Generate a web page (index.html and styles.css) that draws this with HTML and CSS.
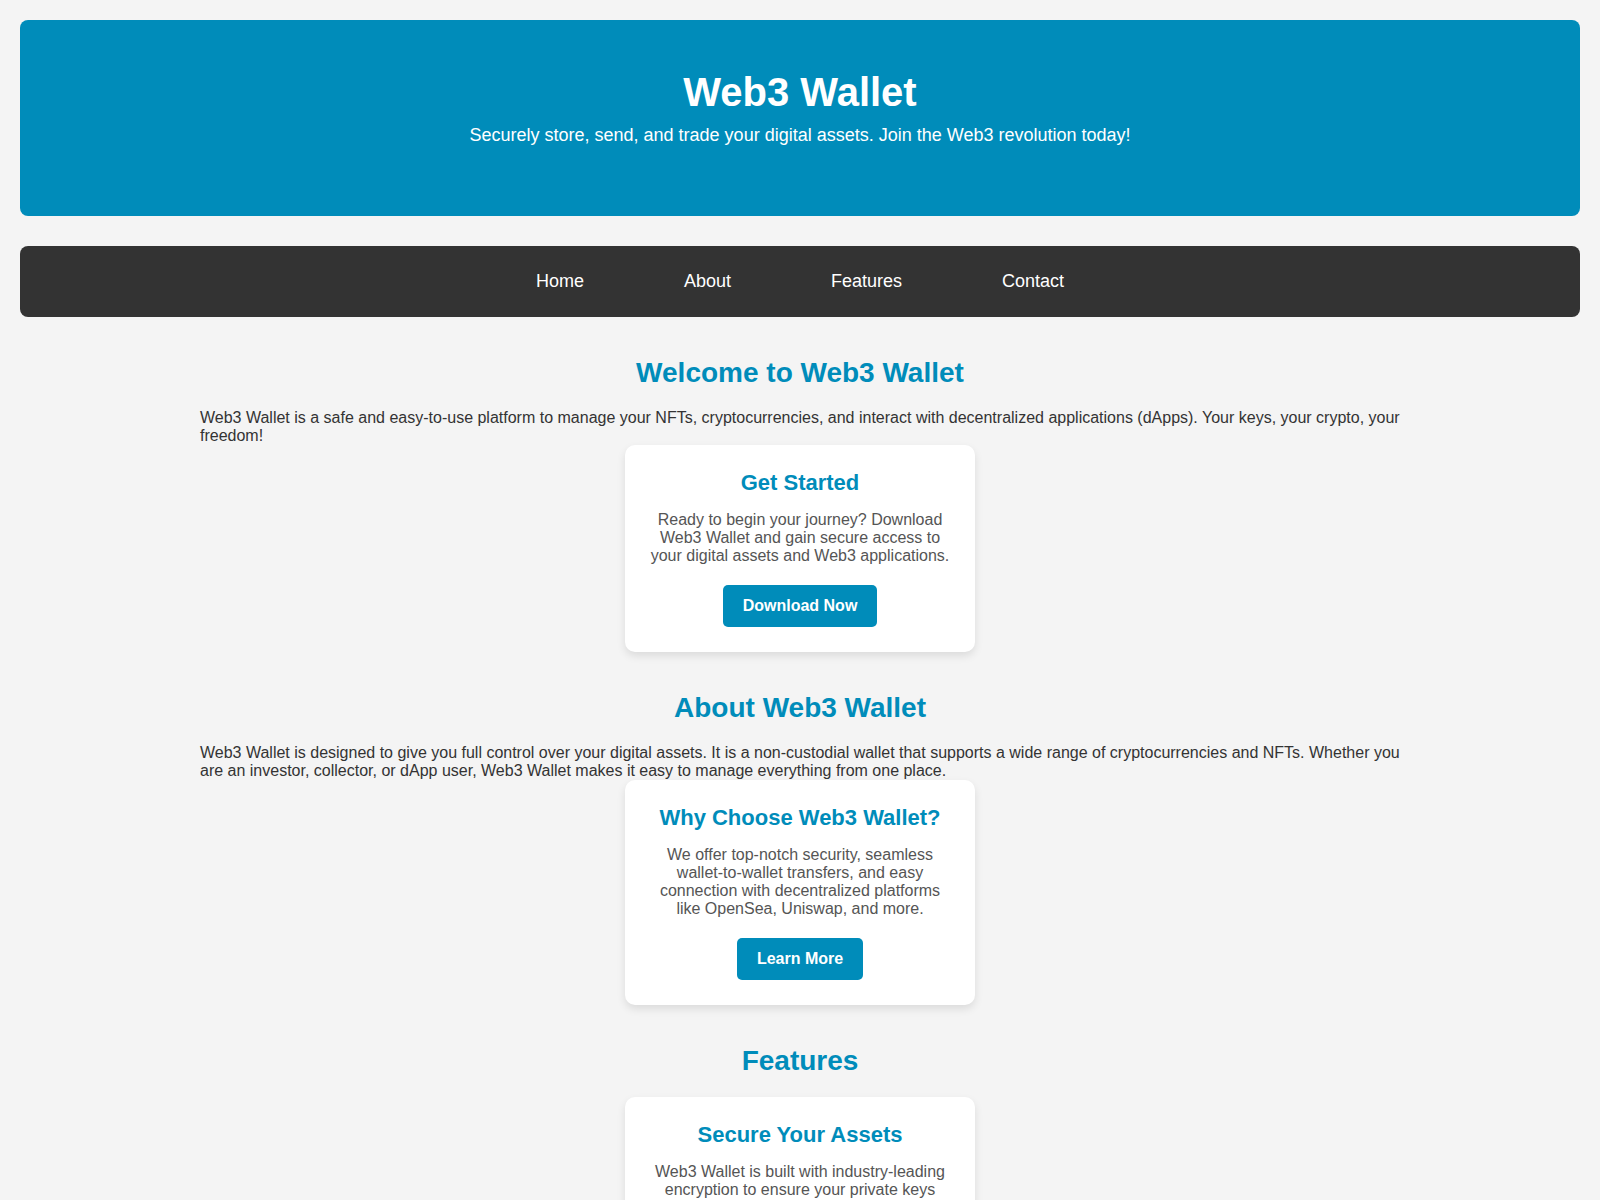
FILE: index.html
```html
<!DOCTYPE html>
<html lang="en">
<head>
<meta charset="utf-8">
<title>Web3 Wallet</title>
<link rel="stylesheet" href="styles.css">
</head>
<body>
<header class="hero">
  <h1 class="hero-title">Web3 Wallet</h1>
  <p class="hero-sub">Securely store, send, and trade your digital assets. Join the Web3 revolution today!</p>
</header>
<nav class="nav">
  <a class="nav-link" href="#home">Home</a>
  <a class="nav-link" href="#about">About</a>
  <a class="nav-link" href="#features">Features</a>
  <a class="nav-link" href="#contact">Contact</a>
</nav>
<main class="main">
  <section class="section" id="home">
    <h2 class="section-title">Welcome to Web3 Wallet</h2>
    <p class="section-text">Web3 Wallet is a safe and easy-to-use platform to manage your NFTs, cryptocurrencies, and interact with decentralized applications (dApps). Your keys, your crypto, your freedom!</p>
    <div class="card">
      <h3 class="card-title">Get Started</h3>
      <p class="card-text">Ready to begin your journey? Download Web3 Wallet and gain secure access to your digital assets and Web3 applications.</p>
      <a class="btn" href="#download">Download Now</a>
    </div>
  </section>
  <section class="section" id="about">
    <h2 class="section-title">About Web3 Wallet</h2>
    <p class="section-text">Web3 Wallet is designed to give you full control over your digital assets. It is a non-custodial wallet that supports a wide range of cryptocurrencies and NFTs. Whether you are an investor, collector, or dApp user, Web3 Wallet makes it easy to manage everything from one place.</p>
    <div class="card">
      <h3 class="card-title">Why Choose Web3 Wallet?</h3>
      <p class="card-text">We offer top-notch security, seamless wallet-to-wallet transfers, and easy connection with decentralized platforms like OpenSea, Uniswap, and more.</p>
      <a class="btn" href="#learn">Learn More</a>
    </div>
  </section>
  <section class="section" id="features">
    <h2 class="section-title">Features</h2>
    <div class="card-list">
      <div class="card">
        <h3 class="card-title">Secure Your Assets</h3>
        <p class="card-text">Web3 Wallet is built with industry-leading encryption to ensure your private keys and assets remain safe at all times.</p>
      </div>
      <div class="card">
        <h3 class="card-title">Multi-Chain Support</h3>
        <p class="card-text">Manage assets across Ethereum, Binance Smart Chain, Polygon, and other popular blockchains.</p>
      </div>
      <div class="card">
        <h3 class="card-title">dApp Browser</h3>
        <p class="card-text">Explore and connect to decentralized applications directly from your wallet.</p>
      </div>
    </div>
  </section>
  <section class="section" id="contact">
    <h2 class="section-title">Contact</h2>
    <p class="section-text center">Have questions? Reach out to our support team at support@web3wallet.io.</p>
  </section>
</main>
</body>
</html>
```

FILE: styles.css
```css
body {
  margin: 0;
  padding: 20px;
  background: #f4f4f4;
  color: #333;
  font-family: "Liberation Sans", Arial, sans-serif;
  font-size: 16px;
}

.hero {
  background: #008cba;
  color: #fff;
  text-align: center;
  padding: 50px 20px 48px;
  border-radius: 8px;
  margin-bottom: 30px;
}

.hero-title {
  font-size: 40px;
  margin: 0 0 10px;
}

.hero-sub {
  font-size: 18px;
  margin: 0 0 22px;
}

.nav {
  background: #333;
  border-radius: 8px;
  padding: 15px;
  display: flex;
  justify-content: center;
  gap: 60px;
}

.nav-link {
  color: #fff;
  text-decoration: none;
  font-size: 18px;
  padding: 10px 20px;
}

.main {
  max-width: 1200px;
  margin: 0 auto;
}

.section {
  padding-top: 40px;
}

.section-title {
  font-size: 28px;
  color: #008cba;
  text-align: center;
  margin: 0 0 20px;
}

.section-text {
  margin: 0;
}

.center {
  text-align: center;
}

.card-list {
  display: flex;
  flex-direction: column;
  gap: 20px;
}

.card {
  width: 300px;
  margin: 0 auto;
  background: #fff;
  padding: 25px;
  border-radius: 10px;
  box-shadow: 0 4px 8px rgba(0, 0, 0, 0.1);
  text-align: center;
}

.card-title {
  font-size: 22px;
  color: #008cba;
  margin: 0;
}

.card-text {
  color: #555;
  margin: 15px 0 20px;
}

.btn {
  display: inline-block;
  background: #008cba;
  color: #fff;
  font-weight: bold;
  line-height: 18px;
  text-decoration: none;
  padding: 12px 20px;
  border-radius: 5px;
}
```
